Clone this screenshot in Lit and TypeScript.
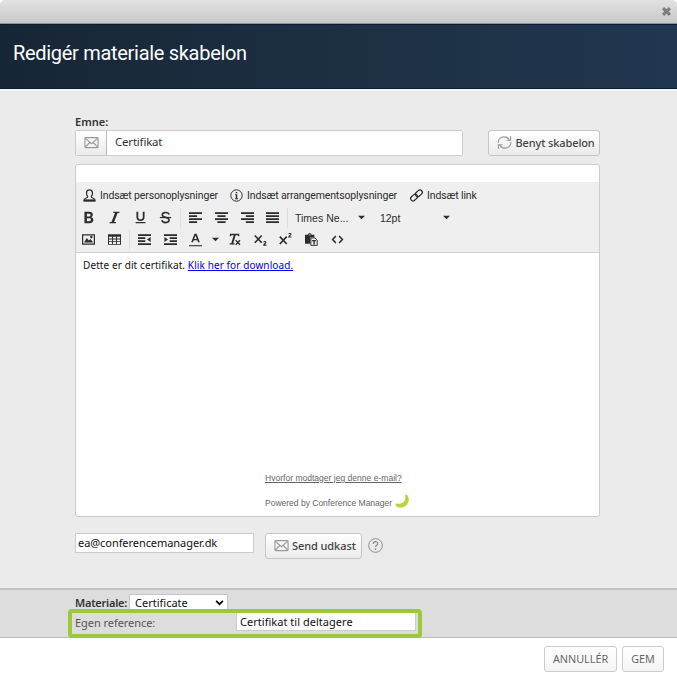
import { LitElement, html, css, svg, TemplateResult } from "lit";
import { customElement, property } from "lit/decorators.js";

const lines = (rows: number[][]) =>
  svg`${rows.map(([x, y, w]) => svg`<rect x=${x} y=${y} width=${w} height="2.200"/>`)}`;

const ICONS: Record<string, TemplateResult> = {
  bold: svg`<path fill-rule="evenodd" d="M3 1h6c3 0 4.300 1.500 4.300 3.600 0 1.400-.7 2.500-2 3.100 1.700.5 2.700 1.800 2.700 3.500C14 13.600 12.200 15 9.200 15H3zM6 3.400v3.400h2.600c1.200 0 1.900-.6 1.900-1.700s-.7-1.700-1.900-1.700zM6 9v3.600h3c1.300 0 2-.7 2-1.800S10.300 9 9 9z"/>`,
  italic: svg`<path d="M6.500 1h7.500v1.500h-2.200L7.500 13.500h2.300V15H2v-1.500h2.300L8.600 2.500H6.500z"/>`,
  underline: svg`<path d="M3 1h2.200v6.300c0 2 .9 3 2.800 3s2.800-1 2.800-3V1H13v6.500c0 3.100-1.800 4.800-5 4.800S3 10.600 3 7.500zM2 13.500h12V15H2z"/>`,
  strike: svg`<path d="M1 7.300h14v1.500H1z"/><path d="M12.300 4.300C12 2.600 10.400 1.800 8.100 1.800 5.800 1.800 4 2.900 4 4.700c0 1.700 1.600 2.500 4 3.100 2.700.7 4.400 1.500 4.400 3.400 0 2-1.900 3.100-4.300 3.100-2.700 0-4.300-1.200-4.500-3" fill="none" stroke="currentColor" stroke-width="1.900"/>`,
  left: lines([[0, 1.5, 16], [0, 5.200, 10], [0, 8.900, 16], [0, 12.600, 10]]),
  center: lines([[0, 1.5, 16], [3, 5.200, 10], [0, 8.900, 16], [3, 12.600, 10]]),
  right: lines([[0, 1.5, 16], [6, 5.200, 10], [0, 8.900, 16], [6, 12.600, 10]]),
  justify: lines([[0, 1.5, 16], [0, 5.200, 16], [0, 8.900, 16], [0, 12.600, 16]]),
  image: svg`<path fill-rule="evenodd" d="M0 1.500h16v13H0zM1.500 3v9.800h13V3zM2.500 11.800l3.300-5.500 2.700 3 2-1.800 3.300 4.300z"/><circle cx="11.500" cy="5" r="1.500"/>`,
  table: svg`<path fill-rule="evenodd" d="M0 1.500h16v13H0zM1.200 4.500v2.300H5V4.500zm5 0v2.300h3.600V4.500zm4.800 0v2.300h3.800V4.500zM1.200 7.900v2.200H5V7.900zm5 0v2.200h3.600V7.900zm4.800 0v2.200h3.800V7.900zM1.200 11.200v2.200H5v-2.200zm5 0v2.200h3.600v-2.200zm4.800 0v2.200h3.800v-2.200z"/>`,
  outdent: svg`${lines([[0, 1.5, 16], [0, 5.200, 9], [0, 8.900, 9], [0, 12.600, 16]])}<path d="M15.500 5v6L11 8z"/>`,
  indent: svg`${lines([[0, 1.5, 16], [7, 5.200, 9], [7, 8.900, 9], [0, 12.600, 16]])}<path d="M.5 5v6L5 8z"/>`,
  color: svg`<path fill-rule="evenodd" d="M6.800 1h2.500l4 10.400h-2.200l-.9-2.600H5.800l-.9 2.600H2.700zM8 3.200 6.400 7.300h3.200z"/><path d="M0 15h16v1.300H0z"/>`,
  clear: svg`<path d="M2.500 1h11.300v3h-1.300l-.4-1.300H9.400L6.500 12.500H8V14H2v-1.500h2L7 2.700H4.300L3.300 4H2z"/><path d="m9.500 9 5.300 5.500M14.800 9l-5.300 5.500" fill="none" stroke="currentColor" stroke-width="1.700"/>`,
  sub: svg`<path d="m1 3 8.500 9M9.500 3 1 12" fill="none" stroke="currentColor" stroke-width="2"/><path d="M12 11.500c.4-1.500 3-1.200 2.700.2-.2.900-2.400 1.800-2.700 3.200h3.300" fill="none" stroke="currentColor" stroke-width="1.300"/>`,
  sup: svg`<path d="m1 4.500 8.500 9M9.500 4.500 1 13.500" fill="none" stroke="currentColor" stroke-width="2"/><path d="M12 1.500C12.400 0 15 .3 14.700 1.700c-.2.900-2.400 1.800-2.700 3.200h3.300" fill="none" stroke="currentColor" stroke-width="1.300"/>`,
  paste: svg`<path fill-rule="evenodd" d="M0 2h3.500c.2-2.300 4.300-2.300 4.500 0h3.500v3.200H6.500v8H0zM4.800 1.800v1h2v-1z"/><path fill="#f0f0f0" stroke="currentColor" stroke-width="1.200" d="M7.200 6h5l2.800 2.700v6.500H7.200z"/><path d="M8.800 8.500h4.600V10H12v4h-1.700v-4H8.800z"/>`,
  code: svg`<path d="M6 3.800 2 8l4 4.200M10 3.800 14 8l-4 4.200" fill="none" stroke="currentColor" stroke-width="1.900"/>`,
  person: svg`<path d="M5.800 9.200C3.700 7 3.400 1.200 8 1.200s4.300 5.800 2.200 8c0 1.400.7 1.600 2.400 2.200 1.700.6 2.400 1.600 2.400 3.300H1c0-1.700.7-2.700 2.400-3.300 1.700-.6 2.400-.8 2.400-2.200z" fill="none" stroke="currentColor" stroke-width="1.500"/><path d="M1.500 12.800h13v2.400h-13z"/>`,
  info: svg`<circle cx="8" cy="8" r="7" fill="none" stroke="currentColor" stroke-width="1.200"/><path d="M7.100 3.600h1.800v1.700H7.100zM6.300 6.600h2.600v4.800h1V12.500H6.200v-1.100h1V7.700h-.9z"/>`,
  link: svg`<g fill="none" stroke="currentColor" stroke-width="1.500" transform="rotate(-42 8 8)"><rect x="-.6" y="5" width="9.300" height="5.800" rx="2.900"/><rect x="7.300" y="5" width="9.300" height="5.800" rx="2.900"/></g>`,
  mail: svg`<g fill="none" stroke="currentColor" stroke-width="1.200"><rect x="1" y="2.800" width="14" height="10.600" rx=".8"/><path d="m1.300 3.300 6.700 6 6.700-6M1.300 13l4.900-5M14.700 13 9.800 8"/></g>`,
  sync: svg`<g fill="none" stroke="currentColor" stroke-width="1.200"><path d="M1.300 8.400C1 4.600 4.200 1.800 7.700 2c2.400 0 4.300 1.200 5.400 3.200M14.700 7.600c.3 3.800-2.900 6.600-6.400 6.400-2.400 0-4.300-1.200-5.400-3.200"/><path d="M14.500 1.300v4.300h-4.300M1.500 14.700v-4.300h4.300"/></g>`,
  help: svg`<circle cx="8" cy="8" r="7.300" fill="none" stroke="currentColor" stroke-width="1"/><path d="M5.700 6.300C5.700 3 10.400 3.200 10.400 6 10.400 7.800 8 7.800 8 9.700" fill="none" stroke="currentColor" stroke-width="1.200"/><circle cx="8" cy="11.800" r=".9"/>`,
  close: svg`<path d="m3 3 10 10M13 3 3 13" fill="none" stroke="currentColor" stroke-width="4.500"/>`,
  caret: svg`<path d="M0 4h16L8 12z"/>`,
  chevron: svg`<path d="m2 5 6 6 6-6" fill="none" stroke="currentColor" stroke-width="3"/>`,
  banana: svg`<path d="M11.500 1.500 13.500.5C17.500 5 16 11.500 10.500 14.500 6.500 16.300 2 15.500 .5 12.500L1.500 10.500C4 11.500 7 11.300 9.500 9.500 12 7.500 12.300 4.500 11.500 1.500z"/>`,
};

@customElement("ui-icon")
class UiIcon extends LitElement {
  @property() name = "";
  static styles = css`
    :host { display: inline-flex; flex: none; width: 13px; height: 13px; }
    svg { width: 100%; height: 100%; display: block; overflow: visible; fill: currentColor; }
  `;
  render() {
    return html`<svg viewBox="0 0 16 16">${ICONS[this.name]}</svg>`;
  }
}

@customElement("app-root")
class AppRoot extends LitElement {
  static styles = css`
    :host {
      display: flex; flex-direction: column; height: 680px; width: 677px; overflow: hidden;
      font-family: "Noto Sans", sans-serif; font-size: 12px; color: #333; background: #fff;
    }
    * { box-sizing: border-box; }
    span { white-space: nowrap; }
    .bar {
      height: 24px; flex: none; display: flex; align-items: center; justify-content: flex-end;
      padding: 0 5px 1px 0; background: linear-gradient(#e2e2e2, #c8c8c8); color: #7d7d7d;
      border-bottom: 1px solid #8b9299; border-radius: 5px 5px 0 0;
    }
    .bar ui-icon { width: 11px; height: 11px; }
    .head {
      height: 65px; flex: none; display: flex; align-items: center; padding: 0 0 7px 13px;
      background: linear-gradient(90deg, #172635, #1c2f43 50%, #21374f);
      border-top: 1px solid #0b1d2d; border-bottom: 1px solid #0b2038;
      color: #fff; font: 20px "Roboto", sans-serif; letter-spacing: -0.3px;
    }
    .main { height: 499px; flex: none; background: #ebebeb; border-top: 2px solid #f4f4f4; padding: 24px 77px 0 75px; }
    .label { height: 15px; line-height: 13px; font-size: 11px; font-weight: 600; letter-spacing: 0; display: block; }
    .subject { display: flex; height: 26px; justify-content: space-between; }
    .group { display: flex; width: 388px; border: 1px solid #ccc; border-radius: 2px; background: #fff; }
    .addon {
      width: 31px; display: flex; align-items: center; justify-content: center; color: #999;
      border-right: 1px solid #bbb; background: linear-gradient(#fff, #ebebeb);
    }
    .addon ui-icon { width: 15px; height: 15px; margin-top: -1px; }
    .value { line-height: 22px; padding-left: 8px; font-size: 11.5px; letter-spacing: -0.2px; }
    .btn {
      display: flex; align-items: center; border: 1px solid #c5c5c5; border-radius: 3px; height: 26px;
      background: linear-gradient(#fff, #ebebeb); color: #444; font-size: 11px; font-weight: 500;
      padding-bottom: 2px;
    }
    .btn ui-icon { color: #999; width: 15px; height: 15px; margin-top: 1px; }
    .use { width: 112px; padding-left: 8px; gap: 3.500px; letter-spacing: -0.12px; }
    .editor {
      margin-top: 8px; height: 353px; background: #fff; border: 1px solid #ccc; border-radius: 3px;
      padding-top: 17px; display: flex; flex-direction: column;
    }
    .tools { height: 71px; flex: none; background: #efefef; border-bottom: 1px solid #d0d0d0; padding-top: 2px; color: #2c2c2c; }
    .row { display: flex; height: 22.4px; align-items: center; font-family: "Liberation Sans", sans-serif; color: #2c2c2c; }
    .inserts { padding-left: 7px; font: 10.5px "Roboto", sans-serif; letter-spacing: -0.13px; }
    .inserts ui-icon { margin-right: 4px; }
    .first { width: 147px; display: flex; align-items: center; }
    .second { width: 180px; display: flex; align-items: center; }
    .third { display: flex; align-items: center; }
    .cell { width: 25.7px; display: flex; justify-content: center; flex: none; }
    .cell.small { width: 13px; }
    .sep { width: 1px; margin: 0 1.6px; height: 20px; background: #ddd; }
    .caret { width: 7px; height: 7px; }
    .font { padding-left: 5px; font-size: 10.5px; letter-spacing: 0.03px; box-sizing: content-box; width: 63px; }
    .size { width: 63px; margin-left: 15px; font-size: 10.5px; }
    .doc { flex: 1; display: flex; flex-direction: column; padding: 4px 7px; color: #111; font-size: 10px; }
    .doc .body { height: 16px; line-height: 16px; letter-spacing: 0.1px; }
    .link { color: #0000ee; text-decoration: underline; }
    .foot { margin: auto 0 1px 182px; font: 8.5px "Liberation Sans", sans-serif; color: #666; display: flex; flex-direction: column; }
    .foot .why { text-decoration: underline; height: 20px; line-height: 8px; letter-spacing: 0.02px; }
    .powered { display: flex; align-items: center; gap: 3px; height: 17px; }
    .powered ui-icon { color: #bdd236; width: 14px; height: 14px; margin-top: -3px; }
    .send { display: flex; margin-top: 16px; }
    .mail { width: 179px; height: 20px; background: #fff; border: 1px solid #ccc; line-height: 17px; padding-left: 2px; color: #111; font-size: 11px; letter-spacing: -0.06px; }
    .draft { width: 97px; margin-left: 11px; padding-left: 8px; gap: 3px; letter-spacing: -0.08px; }
    .help { width: 15px; height: 15px; color: #888; margin: 5px 0 0 6px; }
    .ref {
      height: 50px; flex: none; background: #ddd; border-top: 2px solid #c2c2c2; border-bottom: 1px solid #bbb;
      padding: 4px 0 0 75px; position: relative;
    }
    .pick { display: flex; height: 17px; align-items: center; }
    .pick .bold { font-size: 11px; font-weight: 600; width: 54px; letter-spacing: -0.25px; }
    .select { width: 99px; height: 18px; background: #fff; border: 1px solid #c6c6c6; display: flex; align-items: center; justify-content: space-between; padding: 0 3px 0 5px; color: #111; font-size: 11px; }
    .select ui-icon { width: 9px; height: 9px; color: #000; }
    .own { display: flex; height: 21px; align-items: center; font-size: 11px; color: #555; }
    .own .name { width: 161px; padding-top: 2px; letter-spacing: -0.05px; }
    .own .field { width: 180px; height: 19px; border: 1px solid #ccc; background: #fff; line-height: 18px; padding-left: 3px; color: #111; letter-spacing: 0.03px; }
    .mark { position: absolute; left: 68px; top: 19px; width: 354px; height: 29px; border: 4px solid #9aca3c; border-radius: 4px; }
    .actions { flex: 1; display: flex; justify-content: flex-end; gap: 5px; padding: 8px 13px 0 0; }
    .plain { justify-content: center; color: #666; border-color: #ccc; background: linear-gradient(#fff, #f5f5f5); font-size: 10.8px; font-weight: 400; height: 26px; padding-bottom: 1px; }
    .cancel { width: 73px; }
    .save { width: 42px; }
  `;

  private cells(names: string[]) {
    return names.map((n) => html`<span class="cell"><ui-icon name=${n}></ui-icon></span>`);
  }

  render() {
    return html`
      <div class="bar"><ui-icon name="close"></ui-icon></div>
      <div class="head"><span>Redigér materiale skabelon</span></div>
      <div class="main">
        <span class="label">Emne:</span>
        <div class="subject">
          <div class="group"><div class="addon"><ui-icon name="mail"></ui-icon></div><span class="value">Certifikat</span></div>
          <div class="btn use"><ui-icon name="sync"></ui-icon><span>Benyt skabelon</span></div>
        </div>
        <div class="editor">
          <div class="tools">
            <div class="row inserts">
              <div class="first"><ui-icon name="person"></ui-icon><span>Indsæt personoplysninger</span></div>
              <div class="second"><ui-icon name="info"></ui-icon><span>Indsæt arrangementsoplysninger</span></div>
              <div class="third"><ui-icon name="link"></ui-icon><span>Indsæt link</span></div>
            </div>
            <div class="row">
              ${this.cells(["bold", "italic", "underline", "strike"])}<i class="sep"></i>
              ${this.cells(["left", "center", "right", "justify"])}<i class="sep"></i>
              <span class="font">Times Ne...</span><ui-icon class="caret" name="caret"></ui-icon>
              <span class="size">12pt</span><ui-icon class="caret" name="caret"></ui-icon>
            </div>
            <div class="row">
              ${this.cells(["image", "table"])}<i class="sep"></i>
              ${this.cells(["outdent", "indent", "color"])}
              <span class="cell small"><ui-icon class="caret" name="caret"></ui-icon></span>
              ${this.cells(["clear", "sub", "sup", "paste", "code"])}
            </div>
          </div>
          <div class="doc">
            <span class="body">Dette er dit certifikat. <span class="link">Klik her for download.</span></span>
            <div class="foot">
              <span class="why">Hvorfor modtager jeg denne e-mail?</span>
              <div class="powered"><span>Powered by Conference Manager</span><ui-icon name="banana"></ui-icon></div>
            </div>
          </div>
        </div>
        <div class="send">
          <span class="mail">ea@conferencemanager.dk</span>
          <div class="btn draft"><ui-icon name="mail"></ui-icon><span>Send udkast</span></div>
          <ui-icon class="help" name="help"></ui-icon>
        </div>
      </div>
      <div class="ref">
        <div class="pick"><span class="bold">Materiale:</span><div class="select"><span>Certificate</span><ui-icon name="chevron"></ui-icon></div></div>
        <div class="own"><span class="name">Egen reference:</span><span class="field">Certifikat til deltagere</span></div>
        <div class="mark"></div>
      </div>
      <div class="actions">
        <div class="btn plain cancel"><span>ANNULLÉR</span></div>
        <div class="btn plain save"><span>GEM</span></div>
      </div>
    `;
  }
}
